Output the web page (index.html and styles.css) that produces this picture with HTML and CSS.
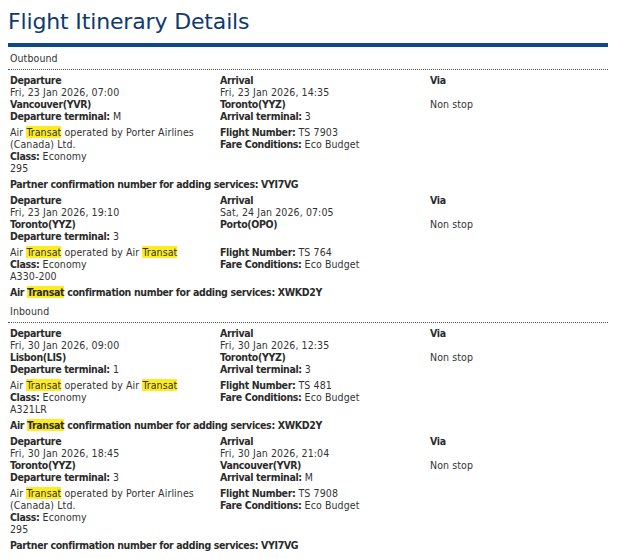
FILE: index.html
```html
<!DOCTYPE html>
<html lang="en">
<head>
<meta charset="utf-8">
<title>Flight Itinerary Details</title>
<link rel="stylesheet" href="styles.css">
</head>
<body>
<h1 class="title">Flight Itinerary Details</h1>
<div class="bar"></div>

<section class="bound">
  <div class="bound-head">Outbound</div>

  <div class="segment">
    <div class="grid">
      <div class="cell b">Departure</div><div class="cell b">Arrival</div><div class="cell b">Via</div>
      <div class="cell"><time>Fri, 23 Jan 2026, 07:00</time></div><div class="cell"><time>Fri, 23 Jan 2026, 14:35</time></div><div class="cell"></div>
      <div class="cell b">Vancouver(YVR)</div><div class="cell b">Toronto(YYZ)</div><div class="cell">Non stop</div>
      <div class="cell"><b>Departure terminal:</b> M</div><div class="cell"><b>Arrival terminal:</b> 3</div><div class="cell"></div>
    </div>
    <div class="grid details">
      <div class="cell">Air <span class="hl">Transat</span> operated by Porter Airlines (Canada) Ltd.<br><b>Class:</b> Economy<br>295</div>
      <div class="cell"><b>Flight Number:</b> TS 7903<br><b>Fare Conditions:</b> Eco Budget</div>
      <div class="cell"></div>
    </div>
    <div class="conf">Partner confirmation number for adding services: VYI7VG</div>
  </div>

  <div class="segment">
    <div class="grid">
      <div class="cell b">Departure</div><div class="cell b">Arrival</div><div class="cell b">Via</div>
      <div class="cell"><time>Fri, 23 Jan 2026, 19:10</time></div><div class="cell"><time>Sat, 24 Jan 2026, 07:05</time></div><div class="cell"></div>
      <div class="cell b">Toronto(YYZ)</div><div class="cell b">Porto(OPO)</div><div class="cell">Non stop</div>
      <div class="cell"><b>Departure terminal:</b> 3</div><div class="cell"></div><div class="cell"></div>
    </div>
    <div class="grid details">
      <div class="cell">Air <span class="hl">Transat</span> operated by Air <span class="hl">Transat</span><br><b>Class:</b> Economy<br>A330-200</div>
      <div class="cell"><b>Flight Number:</b> TS 764<br><b>Fare Conditions:</b> Eco Budget</div>
      <div class="cell"></div>
    </div>
    <div class="conf">Air <span class="hl">Transat</span> confirmation number for adding services: XWKD2Y</div>
  </div>
</section>

<section class="bound">
  <div class="bound-head">Inbound</div>

  <div class="segment">
    <div class="grid">
      <div class="cell b">Departure</div><div class="cell b">Arrival</div><div class="cell b">Via</div>
      <div class="cell"><time>Fri, 30 Jan 2026, 09:00</time></div><div class="cell"><time>Fri, 30 Jan 2026, 12:35</time></div><div class="cell"></div>
      <div class="cell b">Lisbon(LIS)</div><div class="cell b">Toronto(YYZ)</div><div class="cell">Non stop</div>
      <div class="cell"><b>Departure terminal:</b> 1</div><div class="cell"><b>Arrival terminal:</b> 3</div><div class="cell"></div>
    </div>
    <div class="grid details">
      <div class="cell">Air <span class="hl">Transat</span> operated by Air <span class="hl">Transat</span><br><b>Class:</b> Economy<br>A321LR</div>
      <div class="cell"><b>Flight Number:</b> TS 481<br><b>Fare Conditions:</b> Eco Budget</div>
      <div class="cell"></div>
    </div>
    <div class="conf">Air <span class="hl">Transat</span> confirmation number for adding services: XWKD2Y</div>
  </div>

  <div class="segment">
    <div class="grid">
      <div class="cell b">Departure</div><div class="cell b">Arrival</div><div class="cell b">Via</div>
      <div class="cell"><time>Fri, 30 Jan 2026, 18:45</time></div><div class="cell"><time>Fri, 30 Jan 2026, 21:04</time></div><div class="cell"></div>
      <div class="cell b">Toronto(YYZ)</div><div class="cell b">Vancouver(YVR)</div><div class="cell">Non stop</div>
      <div class="cell"><b>Departure terminal:</b> 3</div><div class="cell"><b>Arrival terminal:</b> M</div><div class="cell"></div>
    </div>
    <div class="grid details">
      <div class="cell">Air <span class="hl">Transat</span> operated by Porter Airlines (Canada) Ltd.<br><b>Class:</b> Economy<br>295</div>
      <div class="cell"><b>Flight Number:</b> TS 7908<br><b>Fare Conditions:</b> Eco Budget</div>
      <div class="cell"></div>
    </div>
    <div class="conf">Partner confirmation number for adding services: VYI7VG</div>
  </div>
</section>
</body>
</html>
```
FILE: styles.css
```css
html, body {
  margin: 0;
  padding: 0;
  background: #fff;
}
body {
  padding: 8px;
  width: 600px;
  font-family: "DejaVu Sans Condensed", "DejaVu Sans", sans-serif;
  font-size: 10.5px;
  letter-spacing: 0.1px;
  line-height: 12px;
  color: #333;
}
.title {
  margin: 0;
  font-family: "DejaVu Sans", sans-serif;
  font-weight: normal;
  font-size: 22px;
  line-height: 28px;
  letter-spacing: -0.15px;
  color: #0e3a6f;
}
.bar {
  height: 4px;
  margin-top: 7px;
  background: #0b4a85;
}
.bound-head {
  margin-top: 5px;
  padding: 0 2px 5px;
  border-bottom: 1px dotted #555;
}
.bound + .bound {
  margin-top: 7px;
}
.segment {
  margin-top: 4px;
}
.grid {
  display: grid;
  grid-template-columns: 35% 35% 30%;
}
.cell {
  padding: 0 2px;
}
.b, b {
  font-weight: bold;
  letter-spacing: -0.35px;
  color: #2b2b2b;
}
.details {
  margin-top: 4px;
}
.conf {
  margin-top: 4px;
  padding: 0 2px;
  font-weight: bold;
  letter-spacing: -0.35px;
  color: #2b2b2b;
}
.hl {
  background: #ffec1f;
}
```
